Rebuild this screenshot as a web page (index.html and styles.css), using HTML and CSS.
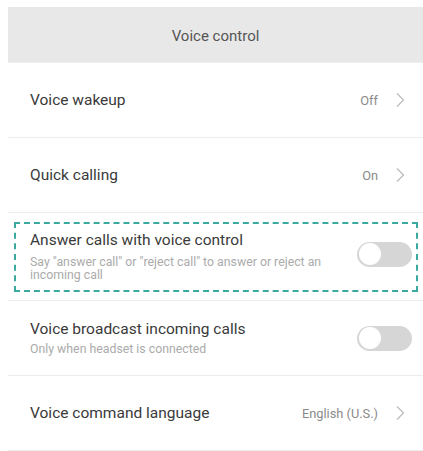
FILE: index.html
```html
<!DOCTYPE html>
<html>
<head>
<meta charset="utf-8">
<link rel="stylesheet" href="styles.css">
</head>
<body>
<div class="screen">
  <div class="header">Voice control</div>
  <div class="row">
    <span class="label">Voice wakeup</span>
    <span class="value">Off</span>
    <svg class="chev" viewBox="0 0 10 16" width="10" height="16"><path d="M2 1.5 L8.5 8 L2 14.5" fill="none" stroke="#bdbdbd" stroke-width="1.3"/></svg>
  </div>
  <div class="row">
    <span class="label">Quick calling</span>
    <span class="value">On</span>
    <svg class="chev" viewBox="0 0 10 16" width="10" height="16"><path d="M2 1.5 L8.5 8 L2 14.5" fill="none" stroke="#bdbdbd" stroke-width="1.3"/></svg>
  </div>
  <div class="row tall">
    <div class="boxed">
      <div class="texts">
        <div class="label">Answer calls with voice control</div>
        <div class="sub">Say "answer call" or "reject call" to answer or reject an incoming call</div>
      </div>
      <div class="toggle t1"><span class="thumb"></span></div>
    </div>
  </div>
  <div class="row">
    <div class="texts">
      <div class="label">Voice broadcast incoming calls</div>
      <div class="sub">Only when headset is connected</div>
    </div>
    <div class="toggle t2"><span class="thumb"></span></div>
  </div>
  <div class="row">
    <span class="label">Voice command language</span>
    <span class="value">English (U.S.)</span>
    <svg class="chev" viewBox="0 0 10 16" width="10" height="16"><path d="M2 1.5 L8.5 8 L2 14.5" fill="none" stroke="#bdbdbd" stroke-width="1.3"/></svg>
  </div>
</div>
</body>
</html>
```
FILE: styles.css
```css
html, body {
  margin: 0;
  padding: 0;
  background: #ffffff;
}
body {
  font-family: Roboto, "Noto Sans", "Liberation Sans", sans-serif;
  color: #3a3a3a;
}
.screen {
  width: 423px;
  height: 451px;
  padding: 7px 0 0 8px;
  box-sizing: border-box;
  overflow: hidden;
}
.header {
  height: 56px;
  background: #e8e8e8;
  display: flex;
  align-items: center;
  justify-content: center;
  font-size: 15px;
  color: #555;
  border-bottom: 1px solid #efefef;
  box-sizing: border-box;
  padding-top: 2px;
}
.row {
  height: 75px;
  border-bottom: 1px solid #ececec;
  box-sizing: border-box;
  display: flex;
  align-items: center;
  padding: 0 18px 0 22px;
}
.row.tall {
  height: 88px;
  padding: 0 5px 0 6px;
}
.label {
  font-size: 15.5px;
  color: #3a3a3a;
  flex: 1;
  line-height: 18px;
}
.value {
  font-size: 12.8px;
  color: #8a8a8a;
  margin-right: 17px;
}
.chev {
  display: block;
}
.texts {
  flex: 1;
  display: flex;
  flex-direction: column;
}
.texts .label {
  flex: none;
}
.sub {
  font-size: 12.3px;
  color: #ababab;
  line-height: 14px;
  margin-top: 4px;
  max-width: 310px;
}
.boxed {
  flex: 1;
  height: 70px;
  border: 2px dashed #3aa9a0;
  box-sizing: border-box;
  display: flex;
  align-items: center;
  padding: 0 4px 0 14px;
}
.boxed .texts {
  margin-top: 0;
}
.boxed .sub {
  margin-top: 7px;
  line-height: 13.5px;
}
.toggle {
  width: 55px;
  height: 25px;
  border-radius: 12.5px;
  background: #d6d6d6;
  position: relative;
  flex: none;
}
.t1 {
  margin-top: -5px;
}
.t2 {
  margin-right: -7px;
}
.thumb {
  position: absolute;
  left: 1.5px;
  top: 1.5px;
  width: 22px;
  height: 22px;
  border-radius: 50%;
  background: #fff;
}
```
